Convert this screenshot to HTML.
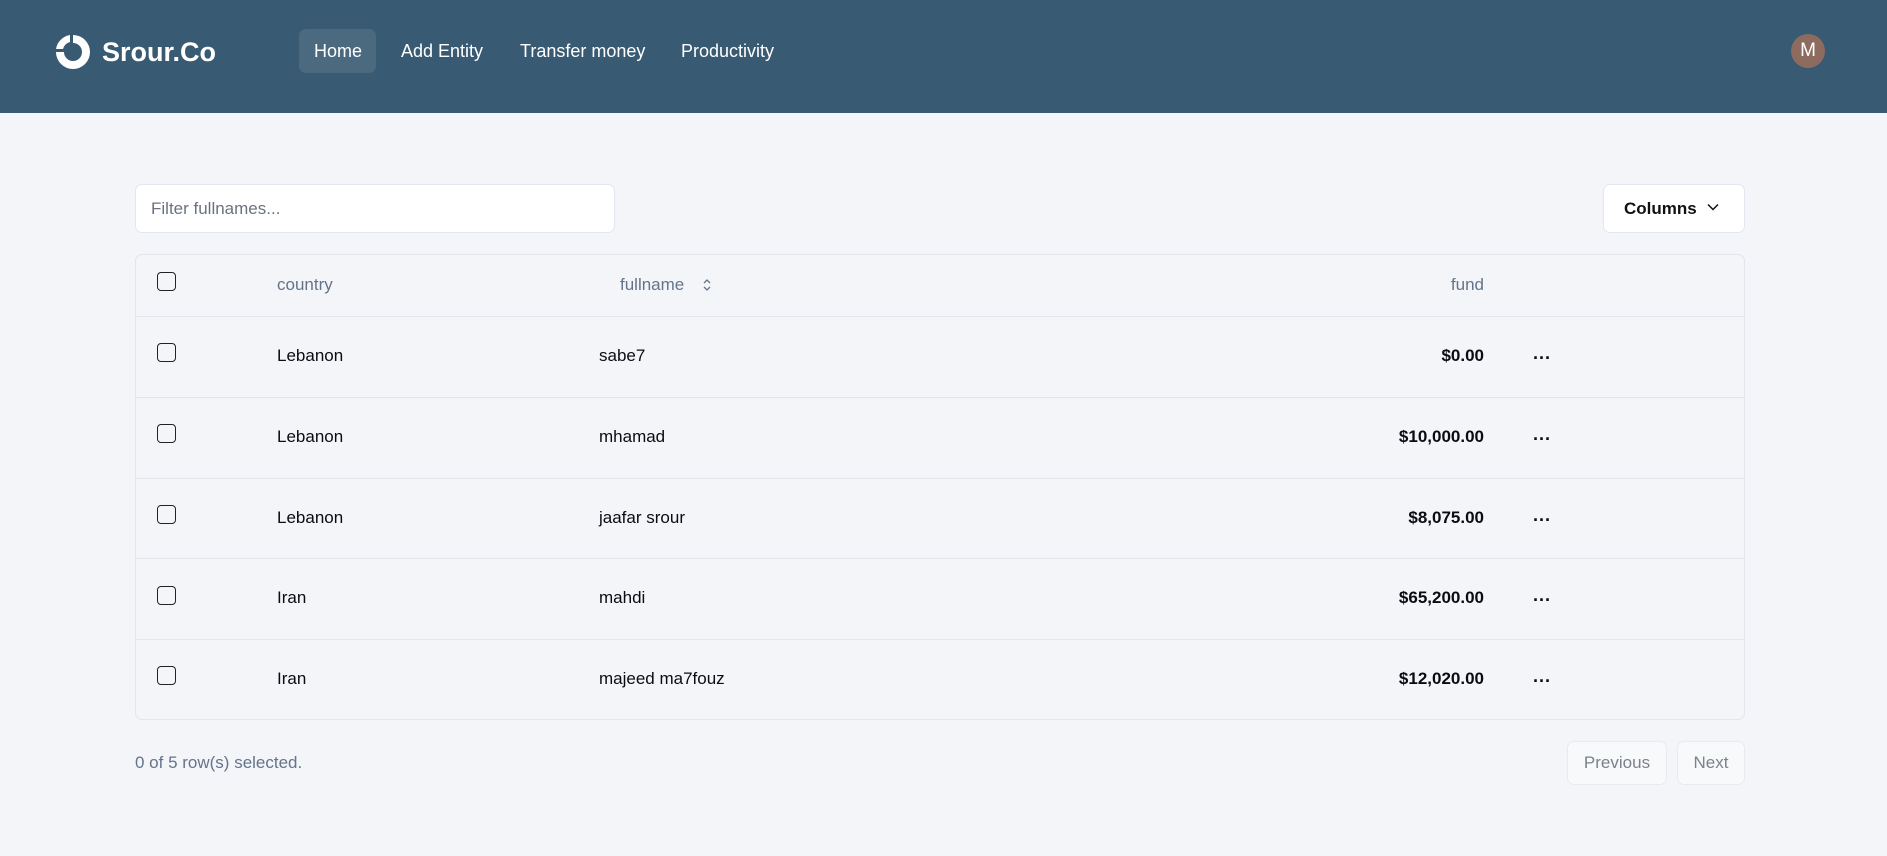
<!DOCTYPE html>
<html><head><style>
*{box-sizing:border-box;margin:0;padding:0}
body{width:1887px;height:856px;background:#f4f5f9;font-family:"Liberation Sans",sans-serif;position:relative;overflow:hidden;color:#0b0b12}
.hdr{position:absolute;left:0;top:0;width:1887px;height:113px;background:#385a73}
.abs{position:absolute}
.nav{position:absolute;top:29px;height:44px;line-height:44px;color:#fff;font-size:18px}
.cb{position:absolute;left:157px;width:19px;height:19px;border:1.5px solid #222;border-radius:4px}
.row{position:absolute;left:135px;width:1610px;border-top:1px solid #e1e5ec}
.t{position:absolute;font-size:17px;line-height:20px}
.dots{position:absolute;left:1533px;font-size:18px;letter-spacing:0px;font-weight:bold}
</style></head><body>
<div class="hdr">
  <svg class="abs" style="left:54px;top:33px" width="38" height="37" viewBox="0 0 38 37">
    <path d="M19 2 A17 17 0 1 1 2 19 L10 19 A9 9 0 1 0 19 10 Z" fill="#fff"/>
    <path d="M16 2 L16 9 A10 10 0 0 0 9 16 L2 16 A17 17 0 0 1 16 2Z" fill="#fff"/>
  </svg>
  <div class="abs" style="left:102px;top:34px;font-size:27px;font-weight:bold;color:#fff;line-height:36px">Srour.Co</div>
  <div class="abs" style="left:299px;top:29px;width:77px;height:44px;border-radius:7px;background:#4c6a7f"></div>
  <div class="nav" style="left:314px">Home</div>
  <div class="nav" style="left:401px">Add Entity</div>
  <div class="nav" style="left:520px">Transfer money</div>
  <div class="nav" style="left:681px">Productivity</div>
  <div class="abs" style="left:1791px;top:34px;width:34px;height:34px;border-radius:50%;background:#8e6b5f;color:#fff;font-size:19px;text-align:center;line-height:34px">M</div>
</div>

<div class="abs" style="left:135px;top:184px;width:480px;height:49px;background:#fff;border:1px solid #e2e6ee;border-radius:7px"></div>
<div class="t" style="left:151px;top:199px;color:#6b7280">Filter fullnames...</div>

<div class="abs" style="left:1603px;top:184px;width:142px;height:49px;background:#fff;border:1px solid #e2e6ee;border-radius:7px"></div>
<div class="t" style="left:1624px;top:199px;font-weight:bold;color:#111">Columns</div>
<svg class="abs" style="left:1707px;top:203px" width="12" height="8" viewBox="0 0 12 8"><path d="M1 1.5 L6 6.5 L11 1.5" stroke="#111" stroke-width="1.5" fill="none"/></svg>

<div class="abs" style="left:135px;top:254px;width:1610px;height:466px;border:1px solid #e1e5ec;border-radius:7px"></div>
<div class="cb" style="top:272px"></div>
<div class="t" style="left:277px;top:275px;color:#64748b">country</div>
<div class="t" style="left:620px;top:275px;color:#64748b">fullname</div>
<svg class="abs" style="left:702px;top:278px" width="10" height="14" viewBox="0 0 10 14"><path d="M2 5 L5 2 L8 5 M2 9 L5 12 L8 9" stroke="#64748b" stroke-width="1.3" fill="none"/></svg>
<div class="t" style="left:1384px;width:100px;text-align:right;top:275px;color:#64748b">fund</div>

<div class="row" style="top:316px"></div>
<div class="row" style="top:397px"></div>
<div class="row" style="top:478px"></div>
<div class="row" style="top:558px"></div>
<div class="row" style="top:639px"></div>

<div class="cb" style="top:343px"></div><div class="t" style="left:277px;top:346px">Lebanon</div><div class="t" style="left:599px;top:346px">sabe7</div><div class="t" style="left:1284px;width:200px;text-align:right;top:346px;font-weight:bold">$0.00</div><div class="dots" style="top:348px">···</div>
<div class="cb" style="top:424px"></div><div class="t" style="left:277px;top:427px">Lebanon</div><div class="t" style="left:599px;top:427px">mhamad</div><div class="t" style="left:1284px;width:200px;text-align:right;top:427px;font-weight:bold">$10,000.00</div><div class="dots" style="top:429px">···</div>
<div class="cb" style="top:505px"></div><div class="t" style="left:277px;top:508px">Lebanon</div><div class="t" style="left:599px;top:508px">jaafar srour</div><div class="t" style="left:1284px;width:200px;text-align:right;top:508px;font-weight:bold">$8,075.00</div><div class="dots" style="top:510px">···</div>
<div class="cb" style="top:586px"></div><div class="t" style="left:277px;top:588px">Iran</div><div class="t" style="left:599px;top:588px">mahdi</div><div class="t" style="left:1284px;width:200px;text-align:right;top:588px;font-weight:bold">$65,200.00</div><div class="dots" style="top:590px">···</div>
<div class="cb" style="top:666px"></div><div class="t" style="left:277px;top:669px">Iran</div><div class="t" style="left:599px;top:669px">majeed ma7fouz</div><div class="t" style="left:1284px;width:200px;text-align:right;top:669px;font-weight:bold">$12,020.00</div><div class="dots" style="top:671px">···</div>

<div class="t" style="left:135px;top:753px;color:#64748b">0 of 5 row(s) selected.</div>
<div class="abs" style="left:1567px;top:741px;width:100px;height:44px;border:1px solid #e8eaef;border-radius:7px;background:#f8f9fb"></div>
<div class="t" style="left:1567px;width:100px;text-align:center;top:753px;color:#7c818b">Previous</div>
<div class="abs" style="left:1677px;top:741px;width:68px;height:44px;border:1px solid #e8eaef;border-radius:7px;background:#f8f9fb"></div>
<div class="t" style="left:1677px;width:68px;text-align:center;top:753px;color:#7c818b">Next</div>
</body></html>
